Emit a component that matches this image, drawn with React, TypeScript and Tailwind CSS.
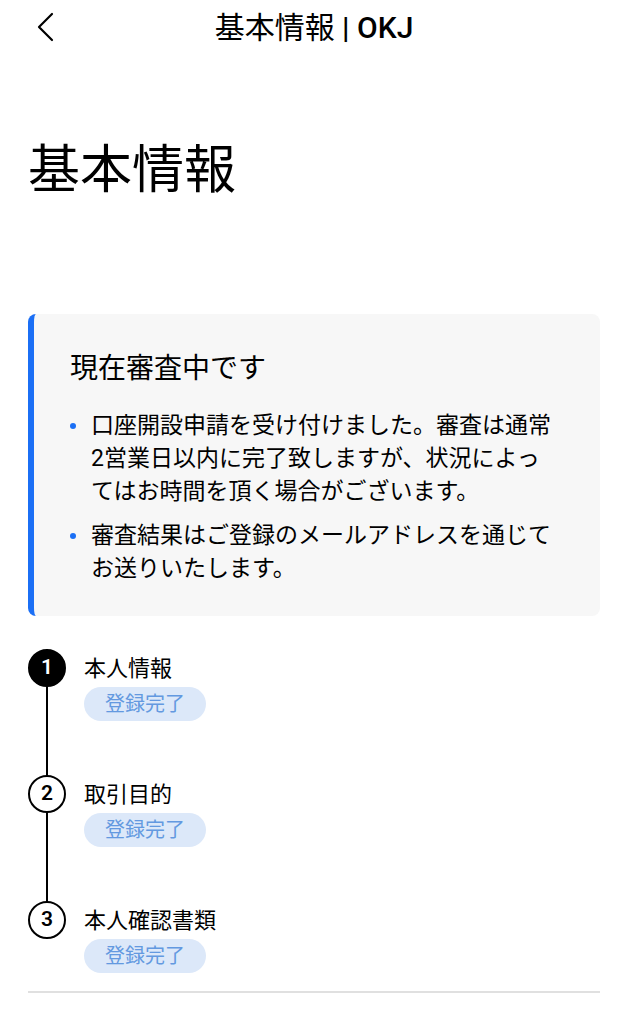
const font = "font-['Roboto','Noto_Sans_CJK_JP',sans-serif]";

const notes = [
	"口座開設申請を受け付けました。審査は通常2営業日以内に完了致しますが、状況によってはお時間を頂く場合がございます。",
	"審査結果はご登録のメールアドレスを通じてお送りいたします。",
];

const steps = [
	{ no: 1, title: "本人情報", active: true },
	{ no: 2, title: "取引目的", active: false },
	{ no: 3, title: "本人確認書類", active: false },
];

function Step({
	no,
	title,
	active,
	last,
}: {
	no: number;
	title: string;
	active: boolean;
	last: boolean;
}) {
	return (
		<div className="flex gap-[18px]">
			<div className="flex w-[38px] flex-col items-center">
				<div
					className={`flex h-[38px] w-[38px] shrink-0 items-center justify-center rounded-full border-2 border-black text-[21px] font-semibold ${
						active ? "bg-black text-white" : "bg-white text-black"
					}`}
				>
					{no}
				</div>
				{!last && <div className="w-[2px] flex-1 bg-black" />}
			</div>
			<div className={`flex flex-col items-start ${last ? "" : "pb-[54px]"}`}>
				<div className="flex h-[38px] items-center text-[22px] text-black">
					{title}
				</div>
				<span className="flex h-[34px] items-center rounded-full bg-[#dce8f9] px-[21px] text-[20px] text-[#6399e0]">
					登録完了
				</span>
			</div>
		</div>
	);
}

export default function App() {
	return (
		<div className={`min-h-screen w-[628px] bg-white ${font} text-black`}>
			<header className="relative flex h-[56px] items-center justify-center">
				<button className="absolute left-[34px] top-[12px] flex h-[30px] w-[22px] items-center justify-center">
					<svg width="20" height="30" viewBox="0 0 20 30" fill="none">
						<polyline
							points="17,2 4,15 17,28"
							stroke="black"
							strokeWidth="2.2"
							strokeLinecap="round"
							strokeLinejoin="round"
						/>
					</svg>
				</button>
				<h1 className="text-[30px] leading-none">
					基本情報 <span className="font-medium">| OKJ</span>
				</h1>
			</header>

			<div className="px-[28px]">
				<h2 className="mt-[84px] text-[52px] leading-[62px]">基本情報</h2>

				<section className="mt-[112px] rounded-[8px] border-l-[6px] border-[#1b6ff5] bg-[#f7f7f7] pb-[31px] pl-[36px] pr-[40px] pt-[37px]">
					<h3 className="text-[28px] leading-[36px]">現在審査中です</h3>
					<ul className="mt-[22px] flex flex-col gap-[11px]">
						{notes.map((n) => (
							<li key={n} className="flex text-[23px] leading-[33px]">
								<span className="flex w-[21px] shrink-0 pt-[14px]">
									<span className="h-[6px] w-[6px] rounded-full bg-[#1b6ff5]" />
								</span>
								<span>{n}</span>
							</li>
						))}
					</ul>
				</section>

				<div className="mt-[33px] flex flex-col">
					{steps.map((s, i) => (
						<Step key={s.no} {...s} last={i === steps.length - 1} />
					))}
				</div>

				<div className="mt-[18px] h-[2px] bg-[#e0e0e0]" />
			</div>
		</div>
	);
}
